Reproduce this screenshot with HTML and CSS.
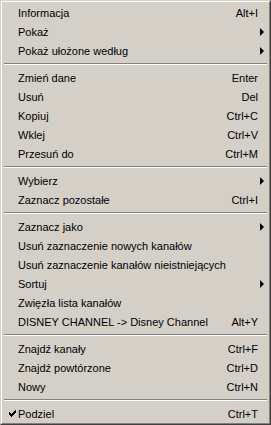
FILE: index.html
```html
<!DOCTYPE html>
<html lang="pl">
<head>
  <meta charset="UTF-8" />
  <title>Menu kanałów</title>
  <link rel="stylesheet" href="styles.css">
</head>
<body>
  <div class="menu">
    <div class="menu-inner">
      <div class="item"><span class="label">Informacja</span><span class="key">Alt+I</span></div>
      <div class="item sub"><span class="label">Pokaż</span></div>
      <div class="item sub"><span class="label">Pokaż ułożone według</span></div>
      <div class="sep"></div>
      <div class="item"><span class="label">Zmień dane</span><span class="key">Enter</span></div>
      <div class="item"><span class="label">Usuń</span><span class="key">Del</span></div>
      <div class="item"><span class="label">Kopiuj</span><span class="key">Ctrl+C</span></div>
      <div class="item"><span class="label">Wklej</span><span class="key">Ctrl+V</span></div>
      <div class="item"><span class="label">Przesuń do</span><span class="key">Ctrl+M</span></div>
      <div class="sep"></div>
      <div class="item sub"><span class="label">Wybierz</span></div>
      <div class="item"><span class="label">Zaznacz pozostałe</span><span class="key">Ctrl+I</span></div>
      <div class="sep"></div>
      <div class="item sub"><span class="label">Zaznacz jako</span></div>
      <div class="item"><span class="label">Usuń zaznaczenie nowych kanałów</span></div>
      <div class="item"><span class="label">Usuń zaznaczenie kanałów nieistniejących</span></div>
      <div class="item sub"><span class="label">Sortuj</span></div>
      <div class="item"><span class="label">Zwięzła lista kanałów</span></div>
      <div class="item"><span class="label">DISNEY CHANNEL -&gt; Disney Channel</span><span class="key">Alt+Y</span></div>
      <div class="sep"></div>
      <div class="item"><span class="label">Znajdź kanały</span><span class="key">Ctrl+F</span></div>
      <div class="item"><span class="label">Znajdź powtórzone</span><span class="key">Ctrl+D</span></div>
      <div class="item"><span class="label">Nowy</span><span class="key">Ctrl+N</span></div>
      <div class="sep"></div>
      <div class="item checked">
        <svg class="check" width="8" height="7" viewBox="0 0 8 7">
          <path d="M0 2h1v3H0z M1 3h1v3H1z M2 4h1v3H2z M3 3h1v3H3z M4 2h1v3H4z M5 1h1v3H5z M6 0h1v3H6z" fill="#000"/>
        </svg>
        <span class="label">Podziel</span><span class="key">Ctrl+T</span>
      </div>
    </div>
  </div>

  <!-- strzałka podmenu, wstawiana przez CSS do .sub -->
</body>
</html>
```

FILE: styles.css
```css
body {
  margin: 0;
  background: #d4d0c8;
}

.menu {
  width: 271px;
  height: 425px;
  box-sizing: border-box;
  border: 1px solid;
  border-color: #d4d0c8 #404040 #404040 #d4d0c8;
  background: #d4d0c8;
  font-family: 'Liberation Sans', Arial, sans-serif;
  font-size: 11px;
  color: #000;
}

.menu-inner {
  height: 100%;
  box-sizing: border-box;
  border: 1px solid;
  border-color: #ffffff #808080 #808080 #ffffff;
  padding: 1px 1px 0 1px;
}

.item {
  position: relative;
  display: flex;
  align-items: center;
  height: 19px;
  padding: 0 10px 0 15px;
}

.label {
  flex: 1;
  white-space: nowrap;
}

.key {
  white-space: nowrap;
}

.sub::after {
  content: '';
  position: absolute;
  right: 4px;
  top: 6px;
  width: 0;
  height: 0;
  border-top: 4px solid transparent;
  border-bottom: 4px solid transparent;
  border-left: 4px solid #000;
}

.check {
  position: absolute;
  left: 6px;
  top: 6px;
}

.sep {
  height: 8px;
  box-sizing: border-box;
  padding-top: 3px;
  margin: 0 1px;
}

.sep::before {
  content: '';
  display: block;
  height: 1px;
  background: #808080;
  border-bottom: 1px solid #ffffff;
}
```
